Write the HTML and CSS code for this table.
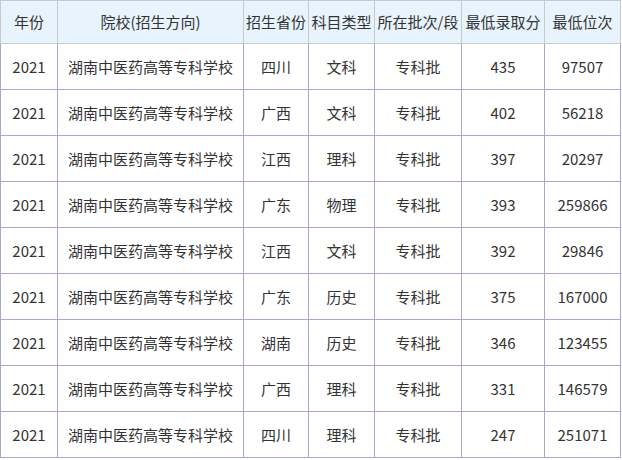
FILE: index.html
```html
<!DOCTYPE html>
<html lang="zh-CN">
<head>
<meta charset="utf-8">
<title>录取分数</title>
<link rel="stylesheet" href="styles.css">
</head>
<body>
<table class="score-table">
  <colgroup>
    <col class="c-year">
    <col class="c-school">
    <col class="c-prov">
    <col class="c-type">
    <col class="c-batch">
    <col class="c-score">
    <col class="c-rank">
  </colgroup>
  <thead>
    <tr>
      <th>年份</th>
      <th>院校(招生方向)</th>
      <th>招生省份</th>
      <th>科目类型</th>
      <th>所在批次/段</th>
      <th>最低录取分</th>
      <th>最低位次</th>
    </tr>
  </thead>
  <tbody>
    <tr><td>2021</td><td>湖南中医药高等专科学校</td><td>四川</td><td>文科</td><td>专科批</td><td>435</td><td>97507</td></tr>
    <tr><td>2021</td><td>湖南中医药高等专科学校</td><td>广西</td><td>文科</td><td>专科批</td><td>402</td><td>56218</td></tr>
    <tr><td>2021</td><td>湖南中医药高等专科学校</td><td>江西</td><td>理科</td><td>专科批</td><td>397</td><td>20297</td></tr>
    <tr><td>2021</td><td>湖南中医药高等专科学校</td><td>广东</td><td>物理</td><td>专科批</td><td>393</td><td>259866</td></tr>
    <tr><td>2021</td><td>湖南中医药高等专科学校</td><td>江西</td><td>文科</td><td>专科批</td><td>392</td><td>29846</td></tr>
    <tr><td>2021</td><td>湖南中医药高等专科学校</td><td>广东</td><td>历史</td><td>专科批</td><td>375</td><td>167000</td></tr>
    <tr><td>2021</td><td>湖南中医药高等专科学校</td><td>湖南</td><td>历史</td><td>专科批</td><td>346</td><td>123455</td></tr>
    <tr><td>2021</td><td>湖南中医药高等专科学校</td><td>广西</td><td>理科</td><td>专科批</td><td>331</td><td>146579</td></tr>
    <tr><td>2021</td><td>湖南中医药高等专科学校</td><td>四川</td><td>理科</td><td>专科批</td><td>247</td><td>251071</td></tr>
  </tbody>
</table>
</body>
</html>
```
FILE: styles.css
```css
html, body {
  margin: 0;
  padding: 0;
  background: #ffffff;
}
body {
  font-family: "Noto Sans CJK SC", "Noto Sans", sans-serif;
  font-size: 15px;
  color: #333333;
}
.score-table {
  border-collapse: collapse;
  table-layout: fixed;
  width: 620px;
}
.c-year { width: 57px; }
.c-school { width: 186px; }
.c-prov { width: 65px; }
.c-type { width: 66px; }
.c-batch { width: 87px; }
.c-score { width: 83px; }
.c-rank { width: 76px; }
.score-table th,
.score-table td {
  padding: 0;
  text-align: center;
  vertical-align: middle;
  white-space: nowrap;
  overflow: hidden;
  font-weight: normal;
  line-height: 20px;
}
.score-table th {
  background: #e8f4fd;
  border: 1px solid #c9c9c9;
  height: 42px;
}
.score-table td {
  border: 1px solid #aba5d2;
  height: 45px;
}
```
